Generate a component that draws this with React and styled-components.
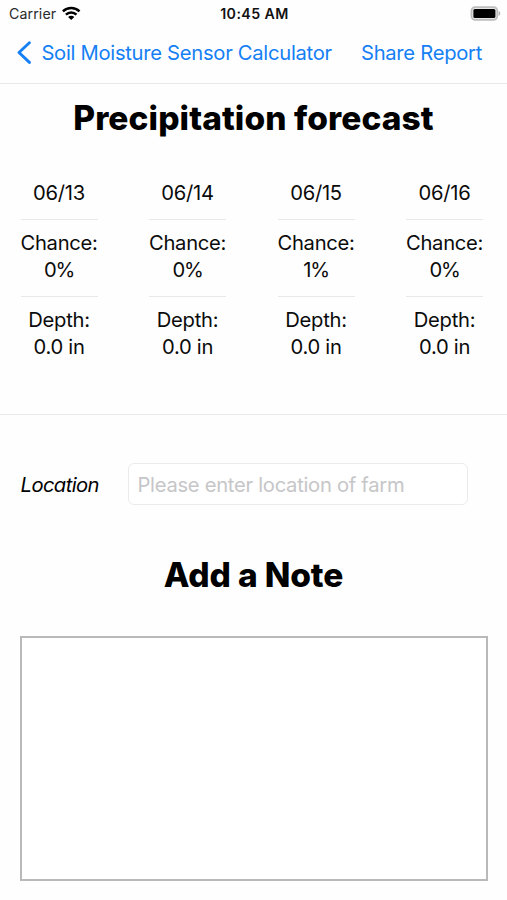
import React from 'react';
import styled, { createGlobalStyle } from 'styled-components';

const Global = createGlobalStyle`
  *, *::before, *::after { box-sizing: border-box; }
  body { margin: 0; background: #fff; }
`;

const Screen = styled.div`
  width: 507px;
  height: 900px;
  overflow: hidden;
  display: flex;
  flex-direction: column;
  background: #fefefe;
  color: #0b0b0b;
  font-family: Inter, 'Liberation Sans', sans-serif;
  font-size: 20.2px;
  line-height: 27px;
  letter-spacing: -0.28px;
`;

const StatusBar = styled.header`
  height: 28px;
  flex: none;
  display: grid;
  grid-template-columns: 1fr auto 1fr;
  align-items: center;
  padding: 0 6px 0 9px;
  font-size: 14.2px;
  line-height: 28px;
`;

const Carrier = styled.div`
  display: flex;
  align-items: center;
  gap: 6px;
  color: #2a2a2a;
  letter-spacing: 0.1px;
`;

const Clock = styled.time`
  font-weight: 600;
  font-size: 14.2px;
  letter-spacing: 0.42px;
  color: #111;
  margin-right: 1px;
`;

const BatterySlot = styled.div`
  display: flex;
  justify-content: flex-end;
  padding-bottom: 2px;
`;

const Drawing = styled.svg`
  display: block;
  flex: none;
`;

const WifiDrawing = styled(Drawing)`
  margin-bottom: 2px;
`;

const NavBar = styled.nav`
  height: 56px;
  flex: none;
  display: flex;
  align-items: flex-start;
  justify-content: space-between;
  padding: 11px 25px 0 17px;
  border-bottom: 1px solid #e9e9e9;
`;

const NavButton = styled.button`
  display: flex;
  align-items: center;
  gap: 9.4px;
  height: 27px;
  padding: 0;
  border: 0;
  background: none;
  color: #1580f5;
  font: inherit;
  letter-spacing: inherit;
  white-space: nowrap;
`;

const Title = styled.h1`
  margin: 0;
  color: #000;
  text-align: center;
  font-size: 33.5px;
  font-weight: 800;
  line-height: 42px;
  letter-spacing: ${(p) => p.$tracking};
`;

const Forecast = styled.section`
  height: 331px;
  flex: none;
  padding-top: 13px;
  border-bottom: 1px solid #e9e9e9;
`;

const Days = styled.div`
  display: flex;
  justify-content: space-between;
  padding: 40px 24px 0 20.5px;
`;

const Day = styled.article`
  width: 77px;
  text-align: center;
`;

const Cell = styled.div`
  padding: ${(p) => (p.$first ? '0 0 13px' : '9px 0 13px')};
  border-bottom: ${(p) => (p.$last ? '0' : '1px solid #e8e8e8')};
  white-space: nowrap;
`;

const Percent = styled.span`
  letter-spacing: -1.2px;
`;

const LocationRow = styled.label`
  display: flex;
  align-items: center;
  height: 42px;
  margin: 48px 39px 0 20px;
  flex: none;
`;

const LocationLabel = styled.span`
  width: 108px;
  padding-left: 0.6px;
  font-style: italic;
  letter-spacing: -0.6px;
  color: #000;
`;

const LocationInput = styled.input`
  flex: 1;
  min-width: 0;
  height: 42px;
  padding: 1px 8px 0 8.5px;
  border: 1px solid #ebebeb;
  border-radius: 6px;
  outline: 0;
  background: #fff;
  font: inherit;
  letter-spacing: inherit;
  &::placeholder { color: #c6c6c8; opacity: 1; }
`;

const NoteHeading = styled.div`
  padding-top: 49px;
  flex: none;
`;

const NoteBox = styled.textarea`
  display: block;
  flex: none;
  width: 468px;
  height: 245px;
  margin: 40px 0 0 20px;
  padding: 8px;
  border: 2px solid #b9b9b9;
  outline: 0;
  resize: none;
  background: #fff;
  font: inherit;
`;

const days = [
  { date: '06/13', chance: '0%', depth: '0.0 in' },
  { date: '06/14', chance: '0%', depth: '0.0 in' },
  { date: '06/15', chance: '1%', depth: '0.0 in' },
  { date: '06/16', chance: '0%', depth: '0.0 in' },
];

function WifiIcon() {
  return (
    <WifiDrawing width="19" height="15" viewBox="0 0 19 15" fill="none" stroke="#000" strokeWidth="2.5">
      <path d="M0.9 5.3a12 12 0 0 1 16.6 0" />
      <path d="M3.9 8.6a7.6 7.6 0 0 1 10.6 0" />
      <path d="M9.2 14 6.1 11a4.4 4.4 0 0 1 6.2 0z" fill="#000" stroke="none" />
    </WifiDrawing>
  );
}

function BatteryIcon() {
  return (
    <Drawing width="31" height="15" viewBox="0 0 31 15">
      <rect x="1.4" y="1.1" width="25.9" height="12.8" rx="3.8" fill="#e6e6e6" stroke="#bdbdbd" strokeWidth="1.7" />
      <rect x="3.4" y="3.1" width="22" height="8.9" rx="1.5" fill="#000" />
      <path d="M28.6 5.1c2.1.5 2.1 4.3 0 4.8z" fill="#b0b0b0" />
    </Drawing>
  );
}

function BackIcon() {
  return (
    <Drawing width="15" height="24" viewBox="0 0 15 24" fill="none" stroke="#1580f5" strokeWidth="2.9" strokeLinecap="round" strokeLinejoin="round">
      <path d="M12.4 1.8 2 11.5l10.4 9.9" />
    </Drawing>
  );
}

export default function App() {
  return (
    <>
      <Global />
      <Screen>
        <StatusBar>
          <Carrier>Carrier <WifiIcon /></Carrier>
          <Clock>10:45 AM</Clock>
          <BatterySlot><BatteryIcon /></BatterySlot>
        </StatusBar>
        <NavBar>
          <NavButton><BackIcon />Soil Moisture Sensor Calculator</NavButton>
          <NavButton>Share Report</NavButton>
        </NavBar>
        <Forecast>
          <Title $tracking="0.08px">Precipitation forecast</Title>
          <Days>
            {days.map((d) => (
              <Day key={d.date}>
                <Cell $first>{d.date}</Cell>
                <Cell>Chance:<br /><Percent>{d.chance}</Percent></Cell>
                <Cell $last>Depth:<br />{d.depth}</Cell>
              </Day>
            ))}
          </Days>
        </Forecast>
        <LocationRow>
          <LocationLabel>Location</LocationLabel>
          <LocationInput placeholder="Please enter location of farm" />
        </LocationRow>
        <NoteHeading>
          <Title as="h2" $tracking="-0.14px">Add a Note</Title>
        </NoteHeading>
        <NoteBox aria-label="Note" />
      </Screen>
    </>
  );
}
